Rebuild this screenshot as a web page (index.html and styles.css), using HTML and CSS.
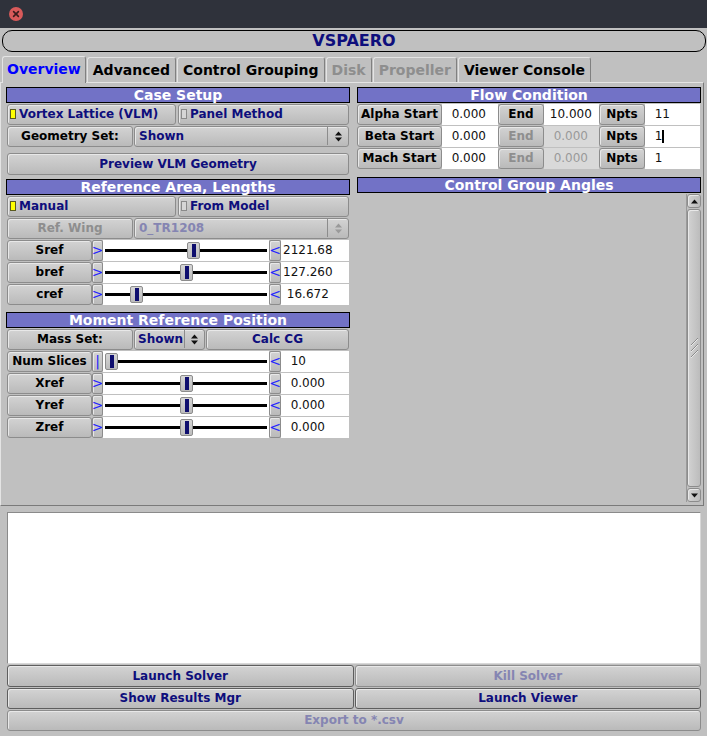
FILE: index.html
```html
<!DOCTYPE html>
<html>
<head>
<meta charset="utf-8">
<link rel="stylesheet" href="styles.css">
</head>
<body>
<div class="titlebar">
  <div class="close"><svg width="14" height="14" viewBox="0 0 14 14"><path d="M4.6 4.6 L9.4 9.4 M9.4 4.6 L4.6 9.4" stroke="#3a1c1c" stroke-width="1.6" stroke-linecap="round"/></svg></div>
</div>
<div class="title">VSPAERO</div>
<div class="tabs">
  <div class="tab sel">Overview</div>
  <div class="tab">Advanced</div>
  <div class="tab">Control Grouping</div>
  <div class="tab dis">Disk</div>
  <div class="tab dis">Propeller</div>
  <div class="tab">Viewer Console</div>
</div>
<div class="panel">
  <div class="col left">
    <div class="sechead">Case Setup</div>
    <div class="row g2">
      <div class="btn toggle tw1"><span class="light on"></span>Vortex Lattice (VLM)</div>
      <div class="btn toggle grow"><span class="light"></span>Panel Method</div>
    </div>
    <div class="row g1">
      <div class="btn lbl">Geometry Set:</div>
      <div class="choice grow"><span class="ctext">Shown</span><span class="arrows"><svg width="7" height="11" viewBox="0 0 7 11"><path d="M0 4.5 L3.5 0.5 L7 4.5Z M0 6.5 L3.5 10.5 L7 6.5Z" fill="#111"/></svg></span></div>
    </div>
    <div class="row preview">
      <div class="btn navy grow">Preview VLM Geometry</div>
    </div>
    <div class="sechead s2">Reference Area, Lengths</div>
    <div class="row g2">
      <div class="btn toggle tw1"><span class="light on"></span>Manual</div>
      <div class="btn toggle grow"><span class="light"></span>From Model</div>
    </div>
    <div class="row g1">
      <div class="btn lbl dis">Ref. Wing</div>
      <div class="choice grow disc"><span class="ctext">0_TR1208</span><span class="arrows"><svg width="7" height="11" viewBox="0 0 7 11"><path d="M0 4.5 L3.5 0.5 L7 4.5Z M0 6.5 L3.5 10.5 L7 6.5Z" fill="#9a9a9a"/></svg></span></div>
    </div>
    <div class="row">
      <div class="btn slbl">Sref</div>
      <div class="btn arr">&gt;</div>
      <div class="track"><div class="thumb" style="left:84px"></div></div>
      <div class="btn arr">&lt;</div>
      <div class="val sval">2121.68</div>
    </div>
    <div class="row">
      <div class="btn slbl">bref</div>
      <div class="btn arr">&gt;</div>
      <div class="track"><div class="thumb" style="left:77px"></div></div>
      <div class="btn arr">&lt;</div>
      <div class="val sval">127.260</div>
    </div>
    <div class="row">
      <div class="btn slbl">cref</div>
      <div class="btn arr">&gt;</div>
      <div class="track"><div class="thumb" style="left:27px"></div></div>
      <div class="btn arr">&lt;</div>
      <div class="val sval"> 16.672</div>
    </div>
    <div class="sechead s3">Moment Reference Position</div>
    <div class="row g1">
      <div class="btn lbl">Mass Set:</div>
      <div class="choice mchoice"><span class="ctext">Shown</span><span class="arrows"><svg width="7" height="11" viewBox="0 0 7 11"><path d="M0 4.5 L3.5 0.5 L7 4.5Z M0 6.5 L3.5 10.5 L7 6.5Z" fill="#111"/></svg></span></div>
      <div class="btn navy grow">Calc CG</div>
    </div>
    <div class="row">
      <div class="btn slbl">Num Slices</div>
      <div class="btn arr">|</div>
      <div class="track"><div class="thumb" style="left:2px"></div></div>
      <div class="btn arr">&lt;</div>
      <div class="val sval">  10</div>
    </div>
    <div class="row">
      <div class="btn slbl">Xref</div>
      <div class="btn arr">&gt;</div>
      <div class="track"><div class="thumb" style="left:77px"></div></div>
      <div class="btn arr">&lt;</div>
      <div class="val sval">  0.000</div>
    </div>
    <div class="row">
      <div class="btn slbl">Yref</div>
      <div class="btn arr">&gt;</div>
      <div class="track"><div class="thumb" style="left:77px"></div></div>
      <div class="btn arr">&lt;</div>
      <div class="val sval">  0.000</div>
    </div>
    <div class="row">
      <div class="btn slbl">Zref</div>
      <div class="btn arr">&gt;</div>
      <div class="track"><div class="thumb" style="left:77px"></div></div>
      <div class="btn arr">&lt;</div>
      <div class="val sval">  0.000</div>
    </div>
  </div>
  <div class="col right">
    <div class="sechead">Flow Condition</div>
    <div class="row">
      <div class="btn flbl">Alpha Start</div>
      <div class="val fv1">  0.000</div>
      <div class="btn fend">End</div>
      <div class="val fv2"> 10.000</div>
      <div class="btn fnp">Npts</div>
      <div class="val fv3">  11</div>
    </div>
    <div class="row">
      <div class="btn flbl">Beta Start</div>
      <div class="val fv1">  0.000</div>
      <div class="btn fend dis">End</div>
      <div class="val fv2 vdis">  0.000</div>
      <div class="btn fnp">Npts</div>
      <div class="val fv3">  1<span class="cursor"></span></div>
    </div>
    <div class="row">
      <div class="btn flbl">Mach Start</div>
      <div class="val fv1">  0.000</div>
      <div class="btn fend dis">End</div>
      <div class="val fv2 vdis">  0.000</div>
      <div class="btn fnp">Npts</div>
      <div class="val fv3">  1</div>
    </div>
    <div class="sechead s4">Control Group Angles</div>
    <div class="cga">
      <div class="sbar">
        <div class="sbtn"><svg width="7" height="5" viewBox="0 0 7 5"><path d="M0 4.5 L3.5 0.5 L7 4.5Z" fill="#111"/></svg></div>
        <div class="sthumb"><svg width="9" height="20" viewBox="0 0 9 20"><path d="M1 7 L8 0 M1 13 L8 6 M1 19 L8 12" stroke="#8a8a8a" stroke-width="1"/><path d="M1 8 L8 1 M1 14 L8 7 M1 20 L8 13" stroke="#e8e8e8" stroke-width="1"/></svg></div>
        <div class="sbtn"><svg width="7" height="5" viewBox="0 0 7 5"><path d="M0 0.5 L3.5 4.5 L7 0.5Z" fill="#111"/></svg></div>
      </div>
    </div>
  </div>
</div>
<div class="log"></div>
<div class="brow r1">
  <div class="btn navy bb">Launch Solver</div>
  <div class="btn ndis">Kill Solver</div>
</div>
<div class="brow">
  <div class="btn navy bb">Show Results Mgr</div>
  <div class="btn navy bb">Launch Viewer</div>
</div>
<div class="brow one">
  <div class="btn ndis">Export to *.csv</div>
</div>
</body>
</html>
```

FILE: styles.css
```css
* { box-sizing: border-box; }
body {
  margin: 0;
  width: 707px;
  height: 736px;
  overflow: hidden;
  background: #c0c0c0;
  font-family: "DejaVu Sans", "Noto Sans", sans-serif;
  color: #000;
}
.titlebar {
  height: 28px;
  background: #2f323b;
  display: flex;
  align-items: center;
  padding-left: 9px;
}
.close {
  width: 14px;
  height: 14px;
  border-radius: 50%;
  background: #d85a5a;
  display: flex;
  align-items: center;
  justify-content: center;
}
.close svg { display: block; }
.title {
  margin: 2px 1px 0 2px;
  height: 22px;
  border: 1px solid #000;
  border-radius: 10px;
  display: flex;
  align-items: center;
  justify-content: center;
  padding-bottom: 2px;
  font-weight: bold;
  font-size: 16px;
  color: #0e0e7c;
}
.tabs {
  display: flex;
  align-items: flex-end;
  gap: 1px;
  height: 26px;
  margin: 4px 0 0 2px;
}
.tab {
  height: 25px;
  padding: 0 5px 1px;
  border: 1px solid;
  border-color: #e4e4e4 #808080 #c0c0c0 #e4e4e4;
  border-bottom: none;
  border-radius: 3px 3px 0 0;
  font-size: 14px;
  font-weight: bold;
  display: flex;
  align-items: center;
  white-space: nowrap;
}
.tab.sel {
  height: 27px;
  padding: 0 4px 2px;
  color: #0000ff;
  margin-bottom: -1px;
  background: #c0c0c0;
  position: relative;
  z-index: 1;
}
.tab.dis { color: #8e8e8e; }
.panel {
  height: 424px;
  width: 704px;
  border-top: 1px solid #e4e4e4;
  border-left: 1px solid #e4e4e4;
  border-right: 1px solid #7a7a7a;
  border-bottom: 1px solid #7a7a7a;
  display: flex;
  gap: 7px;
  padding: 4px 0 0 5px;
}
.col { width: 344px; display: flex; flex-direction: column; }
.sechead {
  height: 16px;
  flex: none;
  background: #7272c6;
  border: 1px solid #000;
  color: #fff;
  font-size: 14px;
  font-weight: bold;
  display: flex;
  align-items: center;
  justify-content: center;
  white-space: nowrap;
  line-height: 1;
}
.sechead.s2 { margin-top: 4px; }
.sechead.s3 { margin-top: 7px; }
.sechead.s4 { margin-top: 8px; }
.row {
  display: flex;
  height: 21px;
  flex: none;
  margin: 1px 0 0;
}
.left .row { margin: 1px 1px 0; }
.row.g1 { gap: 1px; }
.row.g2 { gap: 2px; }
.row.preview { margin-top: 6px; height: 22px; }
.grow { flex: 1; }
.btn {
  flex: none;
  border: 1px solid #8c8c8c;
  border-radius: 3px;
  background: linear-gradient(#d3d3d3, #bababa);
  box-shadow: inset 1px 1px 0 #e8e8e8;
  font-size: 12px;
  font-weight: bold;
  display: flex;
  align-items: center;
  justify-content: center;
  padding-bottom: 1px;
  white-space: nowrap;
  overflow: hidden;
  color: #000;
}
.btn.grow { flex: 1; }
.btn.navy { color: #0e0e7c; }
.btn.dis { color: #8e8e8e; }
.btn.ndis { color: #8585b2; }
.btn.bb { border-color: #5e5e5e; }
.toggle {
  justify-content: flex-start;
  padding-left: 2px;
  gap: 3px;
  color: #0e0e7c;
}
.tw1 { width: 169px; }
.light {
  width: 6px;
  height: 10px;
  border: 1px solid #8a8a8a;
  background: #d6d6d6;
  flex: none;
}
.light.on { background: #ffff00; border-color: #5a5a20; }
.lbl { width: 126px; }
.choice {
  border: 1px solid #8c8c8c;
  border-radius: 3px;
  background: linear-gradient(#d3d3d3, #bababa);
  box-shadow: inset 1px 1px 0 #e8e8e8;
  display: flex;
  align-items: center;
  font-size: 12px;
  font-weight: bold;
  color: #0e0e7c;
  overflow: hidden;
  padding-bottom: 1px;
}
.choice.grow { flex: 1; }
.choice.disc { color: #8585b2; }
.ctext { flex: 1; padding-left: 4px; white-space: nowrap; overflow: hidden; }
.arrows {
  flex: none;
  width: 21px;
  height: 100%;
  border-left: 1px solid #8c8c8c;
  display: flex;
  align-items: center;
  justify-content: center;
}
.mchoice { width: 71px; flex: none; }
.mchoice .ctext { padding-left: 3px; }
.mchoice .arrows { width: 20px; }
.slbl { width: 85px; }
.arr {
  width: 11px;
  font-size: 14px;
  font-weight: normal;
  color: #2424ff;
  border-radius: 2px;
}
.arr + .track + .arr { width: 12px; }
.track {
  flex: none;
  width: 166px;
  position: relative;
  background: linear-gradient(#000, #000) center / calc(100% - 4px) 3px no-repeat, #fff;
}
.thumb {
  position: absolute;
  top: 2px;
  width: 13px;
  height: 17px;
  border: 1px solid #8c8c8c;
  border-radius: 2px;
  background: linear-gradient(#d6d6d6, #bcbcbc);
  display: flex;
  align-items: center;
  justify-content: center;
}
.thumb::after {
  content: "";
  width: 4px;
  height: 13px;
  background: #0e0e6e;
}
.val {
  flex: none;
  background: #fff;
  font-size: 12px;
  color: #111;
  display: flex;
  align-items: center;
  white-space: pre;
  padding-left: 2px;
  padding-bottom: 1px;
}
.sval { width: 68px; }
.flbl { width: 85px; }
.fv1 { width: 56px; }
.fend { width: 46px; }
.fv2 { width: 55px; }
.fnp { width: 46px; }
.fv3 { width: 55px; }
.vdis { background: #d9d9d9; color: #999; }
.cursor {
  display: inline-block;
  width: 2px;
  height: 13px;
  background: #000;
}
.cga {
  margin-top: 1px;
  height: 308px;
  display: flex;
  justify-content: flex-end;
}
.sbar {
  width: 15px;
  display: flex;
  flex-direction: column;
  gap: 1px;
  border-left: 1px solid #9a9a9a;
}
.sbtn, .sthumb {
  border: 1px solid #8c8c8c;
  border-radius: 3px;
  background: linear-gradient(90deg, #d2d2d2, #bcbcbc);
  box-shadow: inset 1px 1px 0 #e8e8e8;
  display: flex;
  align-items: center;
  justify-content: center;
}
.sbtn { height: 14px; flex: none; }
.sthumb { flex: 1; }
.log {
  margin: 6px 6px 0 7px;
  height: 152px;
  background: #fff;
  border: 1px solid;
  border-color: #8a8a8a #d8d8d8 #d8d8d8 #8a8a8a;
}
.brow {
  display: grid;
  grid-template-columns: 1fr 1fr;
  gap: 1px;
  margin: 1px 6px 0 7px;
  height: 21px;
}
.brow.r1 { height: 22px; }
.brow.one { grid-template-columns: 1fr; }
```
